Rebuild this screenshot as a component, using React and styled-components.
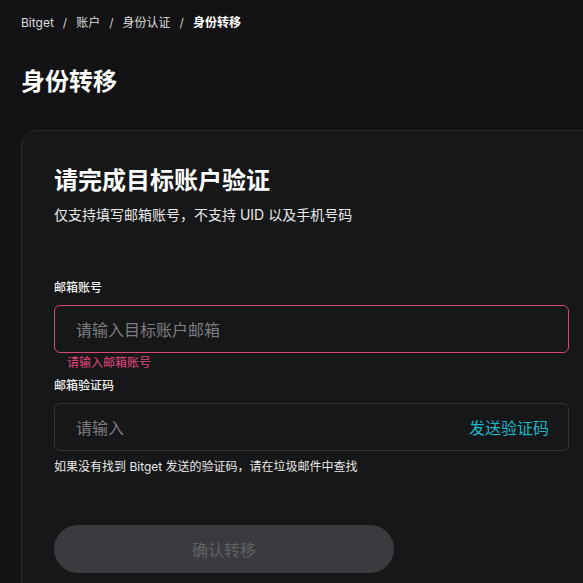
import React from "react";
import styled, { createGlobalStyle } from "styled-components";

const Global = createGlobalStyle`
  html, body {
    margin: 0;
    padding: 0;
    background: #131315;
    overflow: hidden;
  }
  body {
    font-family: Inter, "Noto Sans CJK SC", sans-serif;
    color: #f2f2f2;
  }
`;

const Page = styled.div`
  width: 583px;
  height: 583px;
  padding: 15px 0 0 21px;
  box-sizing: border-box;
  overflow: hidden;
`;

const Crumbs = styled.nav`
  display: flex;
  align-items: center;
  gap: 9px;
  font-size: 12px;
  line-height: 16px;
  color: #e6e6e6;
`;

const Crumb = styled.span`
  font-weight: ${(p) => (p.$current ? 600 : 400)};
  color: ${(p) => (p.$current ? "#ffffff" : "#dcdcdc")};
`;

const Sep = styled.span`
  color: #cfcfcf;
`;

const PageTitle = styled.h1`
  margin: 0;
  padding-top: 35px;
  font-size: 24px;
  line-height: 32px;
  font-weight: 700;
  color: #ffffff;
`;

const Card = styled.section`
  margin-top: 32px;
  width: 582px;
  box-sizing: border-box;
  padding: 35px 33px 40px 32px;
  background: #161718;
  border: 1px solid #2a2b2e;
  border-radius: 16px;
  display: flex;
  flex-direction: column;
`;

const CardTitle = styled.h2`
  margin: 0;
  font-size: 24px;
  line-height: 30px;
  font-weight: 700;
  color: #ffffff;
`;

const CardSub = styled.p`
  margin: 9px 0 0;
  font-size: 14px;
  line-height: 20px;
  color: #e8e8e8;
`;

const Label = styled.label`
  display: block;
  margin-top: ${(p) => p.$top}px;
  font-size: 12px;
  line-height: 16px;
  font-weight: 500;
  color: #f0f0f0;
`;

const Field = styled.div`
  margin-top: ${(p) => p.$top}px;
  height: 48px;
  box-sizing: border-box;
  display: flex;
  align-items: center;
  justify-content: space-between;
  padding: 0 19px 0 21px;
  border: 1px solid ${(p) => (p.$error ? "#d9467a" : "#323336")};
  border-radius: 6px;
  background: #161718;
`;

const Placeholder = styled.span`
  font-size: 16px;
  color: #7c7d80;
`;

const SendLink = styled.span`
  font-size: 16px;
  color: #1fb5c6;
`;

const ErrorText = styled.div`
  margin-top: 2px;
  padding-left: 13px;
  font-size: 12px;
  line-height: 16px;
  color: #e0467f;
`;

const Hint = styled.div`
  margin-top: 8px;
  font-size: 12px;
  line-height: 16px;
  color: #e8e8e8;
`;

const Submit = styled.button`
  margin-top: 50px;
  width: 340px;
  height: 48px;
  border: none;
  border-radius: 24px;
  background: #3a3b3f;
  color: #616266;
  font-family: inherit;
  font-size: 16px;
`;

export default function App() {
  return (
    <>
      <Global />
      <Page>
        <Crumbs>
          <Crumb>Bitget</Crumb>
          <Sep>/</Sep>
          <Crumb>账户</Crumb>
          <Sep>/</Sep>
          <Crumb>身份认证</Crumb>
          <Sep>/</Sep>
          <Crumb $current>身份转移</Crumb>
        </Crumbs>
        <PageTitle>身份转移</PageTitle>
        <Card>
          <CardTitle>请完成目标账户验证</CardTitle>
          <CardSub>仅支持填写邮箱账号，不支持 UID 以及手机号码</CardSub>
          <Label $top={55}>邮箱账号</Label>
          <Field $error $top={9}>
            <Placeholder>请输入目标账户邮箱</Placeholder>
          </Field>
          <ErrorText>请输入邮箱账号</ErrorText>
          <Label $top={7}>邮箱验证码</Label>
          <Field $top={9}>
            <Placeholder>请输入</Placeholder>
            <SendLink>发送验证码</SendLink>
          </Field>
          <Hint>如果没有找到 Bitget 发送的验证码，请在垃圾邮件中查找</Hint>
          <Submit>确认转移</Submit>
        </Card>
      </Page>
    </>
  );
}
